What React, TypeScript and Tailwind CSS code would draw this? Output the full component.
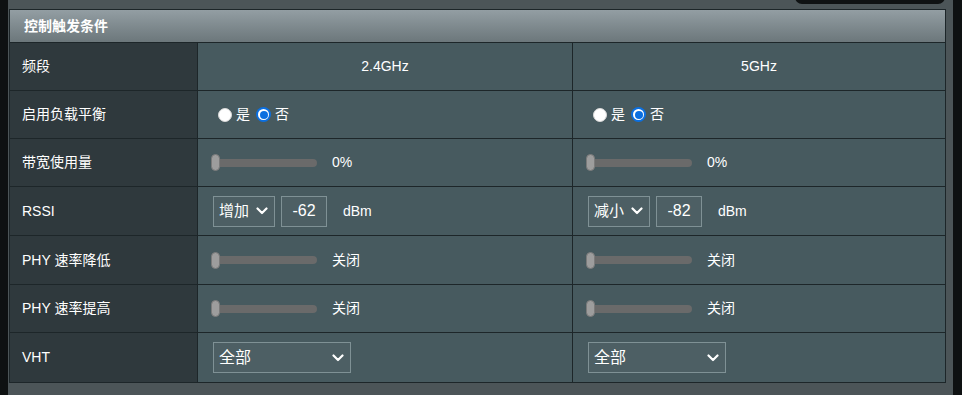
import React from 'react';

const font = { fontFamily: '"Liberation Sans", Arial, "Noto Sans CJK SC", sans-serif' };

const Chevron: React.FC = () => (
  <svg width="12" height="8" viewBox="0 0 12 8" className="shrink-0">
    <path d="M1.5 1.5 L6 6 L10.5 1.5" fill="none" stroke="#ffffff" strokeWidth="2.2" strokeLinecap="round" strokeLinejoin="round" />
  </svg>
);

const Radio: React.FC<{ checked?: boolean }> = ({ checked }) =>
  checked ? (
    <span className="inline-flex w-[15px] h-[15px] rounded-full bg-[#0b6fe0] items-center justify-center">
      <span className="w-[11px] h-[11px] rounded-full bg-white flex items-center justify-center">
        <span className="w-[8px] h-[8px] rounded-full bg-[#0b6fe0]" />
      </span>
    </span>
  ) : (
    <span className="inline-block w-[14px] h-[14px] rounded-full bg-white border border-[#d8d8d8]" />
  );

const Slider: React.FC<{ label: string }> = ({ label }) => (
  <div className="flex items-center">
    <div className="relative w-[106px] h-[17px] flex items-center">
      <div className="w-full h-[8px] rounded-full bg-[#6a6a6a] ml-[2px]" />
      <div className="absolute left-0 top-0 w-[9px] h-[17px] rounded-full bg-[#9d9d9d] border border-[#7a7a7a]" />
    </div>
    <span className="ml-[15px] text-[14px] text-white">{label}</span>
  </div>
);

const Select: React.FC<{ value: string; w: string; size: string }> = ({ value, w, size }) => (
  <div className={`${w} ${size} h-[31px] ml-[2px] flex items-center justify-between pl-[5px] pr-[6px] border border-[#7f9195] bg-[#4d5f64] text-white`}>
    <span>{value}</span>
    <Chevron />
  </div>
);

const RSSI: React.FC<{ mode: string; val: string }> = ({ mode, val }) => (
  <div className="flex items-center">
    <Select value={mode} w="w-[62px]" size="text-[15px]" />
    <div className="ml-[6px] w-[46px] h-[31px] flex items-center justify-center border border-[#7f9195] bg-[#4d5f64] text-white text-[16px]">{val}</div>
    <span className="ml-[16px] text-[14px] text-white">dBm</span>
  </div>
);

const LoadBalance: React.FC = () => (
  <div className="flex items-center text-[14px] text-white pl-[7px]">
    <Radio />
    <span className="ml-[4px] mr-[6px]">是</span>
    <Radio checked />
    <span className="ml-[4px]">否</span>
  </div>
);

const rows: { label: string; h: string; a: React.ReactNode; b: React.ReactNode; center?: boolean }[] = [
  { label: '频段', h: 'h-[48px]', a: '2.4GHz', b: '5GHz', center: true },
  { label: '启用负载平衡', h: 'h-[48px]', a: <LoadBalance />, b: <LoadBalance /> },
  { label: '带宽使用量', h: 'h-[48px]', a: <Slider label="0%" />, b: <Slider label="0%" /> },
  { label: 'RSSI', h: 'h-[49px]', a: <RSSI mode="增加" val="-62" />, b: <RSSI mode="减小" val="-82" /> },
  { label: 'PHY 速率降低', h: 'h-[49px]', a: <Slider label="关闭" />, b: <Slider label="关闭" /> },
  { label: 'PHY 速率提高', h: 'h-[48px]', a: <Slider label="关闭" />, b: <Slider label="关闭" /> },
  { label: 'VHT', h: 'h-[49px]', a: <Select value="全部" w="w-[138px]" size="text-[16px]" />, b: <Select value="全部" w="w-[138px]" size="text-[16px]" /> },
];

export default function App() {
  return (
    <div className="w-[962px] h-[395px] flex bg-[#4c5558] overflow-hidden" style={font}>
      <div className="w-[8px] h-full bg-[#0e1112]" />
      <div className="flex-1 flex flex-col relative">
        <div className="absolute right-[8px] top-[-10px] w-[150px] h-[14px] rounded-[8px] bg-[#0f1213]" />
        <div className="h-[9px]" />
        <div className="ml-[1px] w-[937px] border border-[#1d2629]">
          <div className="h-[33px] flex items-center pl-[14px] bg-gradient-to-b from-[#939ea3] to-[#6c777b] border-b border-[#1d2629] text-white text-[14px] font-bold">
            控制触发条件
          </div>
          {rows.map((r, i) => (
            <div key={r.label} className={`flex ${r.h} ${i < rows.length - 1 ? 'border-b border-[#1d2629]' : ''}`}>
              <div className="w-[187px] flex items-center pl-[12px] bg-[#2f393d] text-[14px] text-white">{r.label}</div>
              <div className={`w-[375px] flex items-center border-l border-[#1d2629] bg-[#475a5f] text-[14px] text-white ${r.center ? 'justify-center' : 'pl-[13px]'}`}>{r.a}</div>
              <div className={`flex-1 flex items-center border-l border-[#1d2629] bg-[#475a5f] text-[14px] text-white ${r.center ? 'justify-center' : 'pl-[13px]'}`}>{r.b}</div>
            </div>
          ))}
        </div>
      </div>
      <div className="w-[9px] h-full bg-[#0e1112]" />
    </div>
  );
}
